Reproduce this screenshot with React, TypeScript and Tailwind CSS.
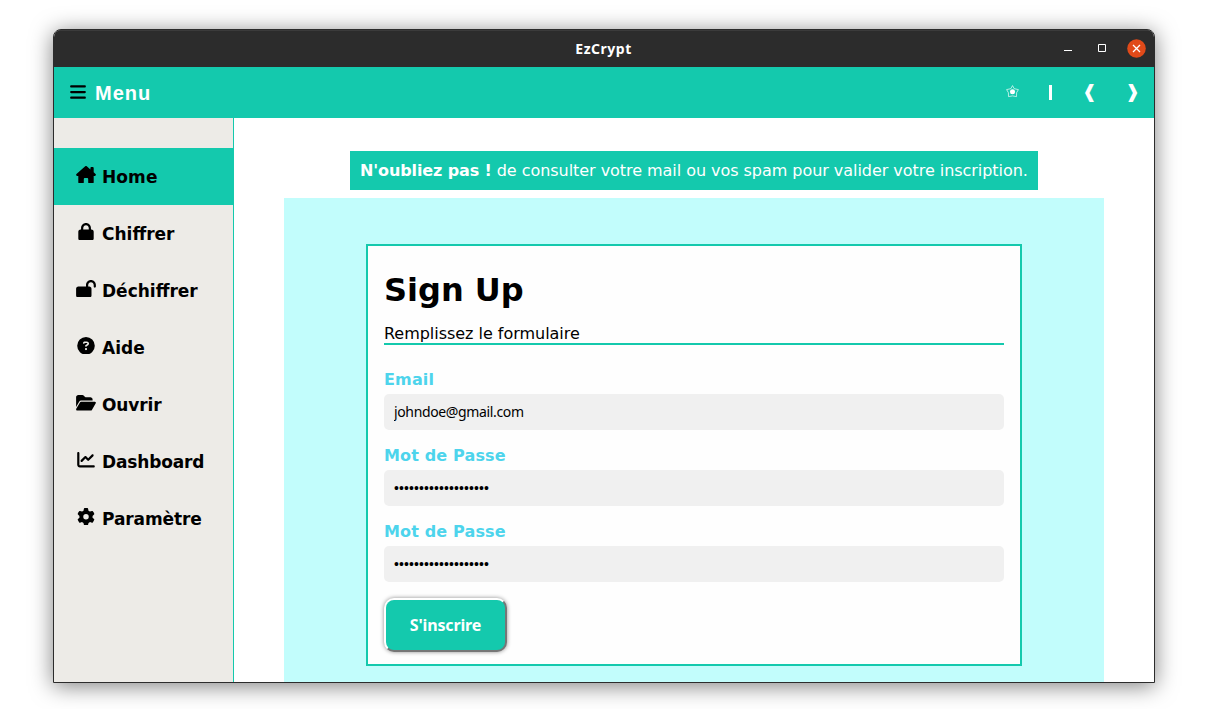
import React from 'react';
import { FaBars, FaHouseChimney, FaLock, FaLockOpen, FaCircleQuestion, FaFolderOpen, FaChartLine, FaGear } from 'react-icons/fa6';

const items = [
  { label: 'Home', Icon: FaHouseChimney, active: true, spacing: 'tracking-[0.1px]' },
  { label: 'Chiffrer', Icon: FaLock, spacing: 'tracking-normal' },
  { label: 'Déchiffrer', Icon: FaLockOpen, spacing: 'tracking-normal' },
  { label: 'Aide', Icon: FaCircleQuestion, spacing: 'tracking-normal' },
  { label: 'Ouvrir', Icon: FaFolderOpen, spacing: 'tracking-[-0.1px]' },
  { label: 'Dashboard', Icon: FaChartLine, spacing: 'tracking-[-0.15px]' },
  { label: 'Paramètre', Icon: FaGear, spacing: 'tracking-[-0.1px]' },
];

function TitleBar() {
  return (
    <header className="grid h-[37px] shrink-0 grid-cols-[1fr_auto_1fr] items-center border-t border-[#3b3b3b] bg-[#2c2c2c]">
      <span />
      <span className="mr-px pb-px font-['Noto_Sans',sans-serif] text-[14px] leading-5 font-bold tracking-[0.5px] text-white">EzCrypt</span>
      <div className="flex items-center justify-end gap-[15px] pr-[8px] pb-[2px]">
        <svg className="size-[19px]" viewBox="0 0 19 19"><path d="M5 11.500h8" stroke="white" /></svg>
        <svg className="size-[19px]" viewBox="0 0 19 19"><path d="M5.500 5.500h7v7h-7z" fill="none" stroke="white" /></svg>
        <svg className="size-[19px]" viewBox="0 0 19 19">
          <circle cx="9.500" cy="9.500" r="9.300" fill="#e14a19" />
          <path d="M6 6l7 7M13 6l-7 7" stroke="white" strokeWidth="1.300" />
        </svg>
      </div>
    </header>
  );
}

function Toolbar() {
  return (
    <div className="flex h-[51px] shrink-0 items-center bg-[#14c9ad] pr-[16px] pl-4 text-white">
      <FaBars className="mb-[2px] h-[18px] w-4 text-black" />
      <span className="ml-[9px] font-['Liberation_Sans',sans-serif] text-[20px] leading-6 font-bold tracking-[1px]">Menu</span>
      <div className="ml-auto flex items-center font-['DejaVu_Sans',sans-serif]">
        <svg className="mb-[3px] h-[13px] w-[13px]" viewBox="0 0 13 13">
          <path d="M6.500.6 8.200 3.700 12.400 4.600 10.600 7.700 10.500 11.600 6.500 10.900 2.500 11.600 2.400 7.700.6 4.600 4.800 3.700Z" fill="none" stroke="white" strokeWidth=".8" strokeLinejoin="round" strokeOpacity=".85" />
          <circle cx="6.500" cy="6.700" r="2.500" fill="white" />
        </svg>
        <span className="ml-[30px] h-[15px] w-[3px] bg-white" />
        <span className="ml-[30px] mb-[2px] w-[13px] text-center text-[18px] leading-5">❰</span>
        <span className="ml-[30px] mb-[2px] w-[13px] text-center text-[18px] leading-5">❱</span>
      </div>
    </div>
  );
}

function Sidebar() {
  return (
    <nav className="w-[180px] shrink-0 border-r border-[#14c9ad] bg-[#edebe7] pt-[30px] text-black">
      {items.map(({ label, Icon, active, spacing }) => (
        <a key={label} className={`flex h-[57px] items-center pl-[22px] ${active ? 'bg-[#14c9ad]' : ''}`}>
          <Icon className="mb-[4px] h-[17.6px] w-5 shrink-0" />
          <span className={`ml-[6px] text-[17px] leading-5 font-bold ${spacing}`}>{label}</span>
        </a>
      ))}
    </nav>
  );
}

function Field({ label, value, secret }: { label: string; value: string; secret?: boolean }) {
  return (
    <label className="mb-[15px] block">
      <span className="block h-[25px] text-[16px] leading-[21px] font-bold tracking-[0.15px] text-[#4dd4ec]">{label}</span>
      <input
        readOnly
        value={value}
        className={`block h-9 w-full rounded-[5px] bg-[#f0f0f0] px-[10px] text-black outline-none ${secret ? "font-['Liberation_Sans',sans-serif] text-[14px] tracking-[0.1px]" : "pb-[2px] font-['Noto_Sans',sans-serif] text-[14px] tracking-[-0.36px]"}`}
      />
    </label>
  );
}

export default function App() {
  const dots = '•'.repeat(19);
  return (
    <div className="h-[709px] w-[1214px] overflow-hidden bg-white pt-[29px] pl-[53px] font-['DejaVu_Sans',sans-serif]">
      <div className="flex h-[654px] w-[1102px] flex-col overflow-hidden rounded-t-[8px] border border-[#2c2c2c] bg-white shadow-[0_3px_22px_rgba(0,0,0,0.5)]">
        <TitleBar />
        <Toolbar />
        <div className="flex min-h-0 flex-1">
          <Sidebar />
          <main className="flex flex-1 flex-col items-center overflow-hidden pt-[33px]">
            <p className="flex h-[39px] w-[688px] shrink-0 items-center bg-[#14c9ad] px-[10px] text-[16px] tracking-[-0.045px] whitespace-pre text-white"><strong className="tracking-[-0.12px]">N'oubliez pas !</strong> de consulter votre mail ou vos spam pour valider votre inscription.</p>
            <section className="mt-2 h-[500px] w-[820px] shrink-0 bg-[#c2fdfc] px-[82px] pt-[46px]">
              <form className="h-[422px] border-2 border-[#14c9ad] bg-[#fefefe] px-4 pt-[25px] text-black">
                <h1 className="text-[32px] leading-[38px] font-bold">Sign Up</h1>
                <p className="mt-[15px] mb-[24px] h-[21px] border-b-2 border-[#14c9ad] text-[16px] leading-[19px] tracking-[-0.03px]">Remplissez le formulaire</p>
                <Field label="Email" value="johndoe@gmail.com" />
                <Field label="Mot de Passe" value={dots} secret />
                <Field label="Mot de Passe" value={dots} secret />
                <button type="button" className="mt-px h-[54px] w-[123px] rounded-[10px] border-2 border-t-white border-r-[#767676] border-b-[#767676] border-l-white bg-[#14c9ad] font-['Noto_Sans',sans-serif] text-[16px] font-bold tracking-[-0.15px] text-white shadow-[0_0_4px_rgba(0,0,0,0.45)]">S'inscrire</button>
              </form>
            </section>
          </main>
        </div>
      </div>
    </div>
  );
}
